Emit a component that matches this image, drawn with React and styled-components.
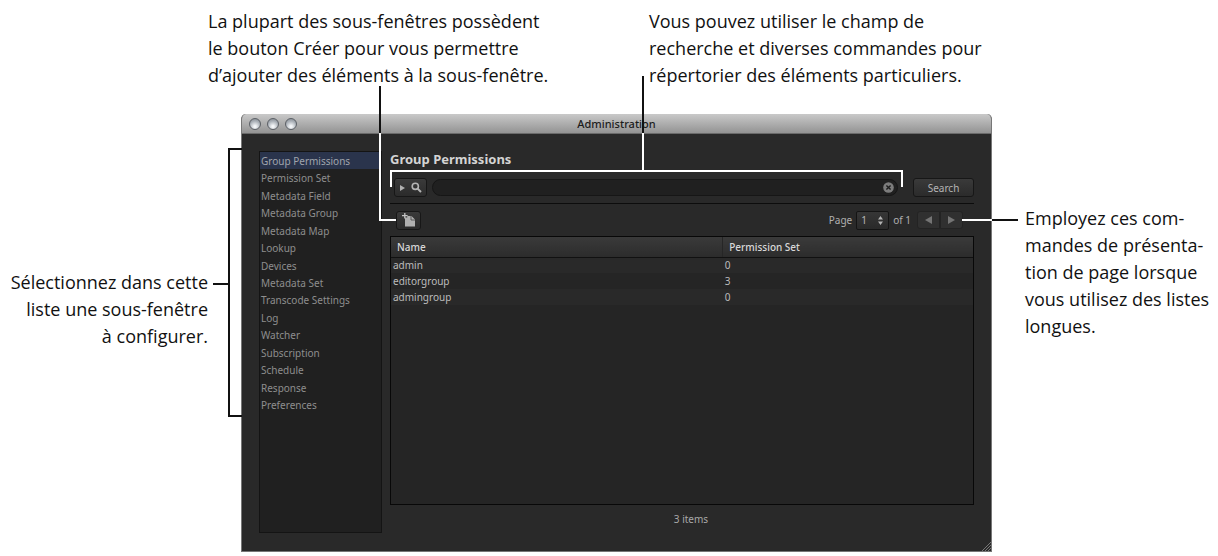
import React, { useState } from "react";
import styled, { createGlobalStyle } from "styled-components";

const GlobalStyle = createGlobalStyle`
    * {
        box-sizing: border-box;
    }

    body {
        margin: 0;
        background: #fff;
        color: #111;
        font-family: "Noto Sans", "Open Sans", sans-serif;
    }

    button, input, select {
        font-family: inherit;
        margin: 0;
    }
`

const Figure = styled.main`
    position: relative;
    display: grid;
    grid-template-columns: 241px minmax(0, 1fr) 226px;
    grid-template-rows: 114px auto;
    min-width: 1100px;
`

const TopNotes = styled.div`
    grid-column: 1 / -1;
    display: grid;
    grid-template-columns: 441px 1fr;
    padding: 8px 0 0 208px;
`

const Note = styled.p`
    margin: 0;
    font-family: "Open Sans", "Noto Sans", sans-serif;
    font-size: 18px;
    line-height: 27px;
    white-space: pre-line;
    text-align: ${(props) => props.$align || "left"};
`

const LeftNote = styled.aside`
    padding: 155px 33px 0 0;
    white-space: nowrap;
`

const RightNote = styled.aside`
    padding: 91px 0 0 33px;
    white-space: nowrap;
`

/* Callout lines, drawn over the window */
const Leader = styled.div`
    position: absolute;
    pointer-events: none;
    top: ${(props) => props.$top}px;
    left: ${(props) => (props.$left === undefined ? "auto" : `${props.$left}px`)};
    right: ${(props) => (props.$right === undefined ? "auto" : `${props.$right}px`)};
    width: ${(props) => (props.$width === undefined ? "auto" : `${props.$width}px`)};
    height: ${(props) => props.$height}px;
    border: 0 solid ${(props) => (props.$light ? "#fff" : "#111")};
    border-width: ${(props) => props.$sides};
`

const Window = styled.section`
    display: flex;
    flex-direction: column;
    min-height: 438px;
    border: solid #777;
    border-width: 0 1px 1px;
    border-radius: 5px 5px 0 0;
    background: #292929;
    overflow: hidden;
    position: relative;
`

const TitleBar = styled.header`
    display: grid;
    grid-template-columns: 60px 1fr 60px;
    align-items: center;
    height: 20px;
    padding: 0 7px;
    border-bottom: 1px solid #6a6a6a;
    background: linear-gradient(#c9c9c9, #939393);
`

const Lights = styled.div`
    display: flex;
    gap: 6px;
`

const Light = styled.button`
    width: 12px;
    height: 12px;
    padding: 0;
    border: 1px solid #5c6066;
    border-radius: 50%;
    background: radial-gradient(circle at 50% 75%, #f4f6f8 10%, #a9afb6 60%, #7d838a);
`

const WindowTitle = styled.h1`
    margin: 0;
    color: #1c1c1c;
    font-size: 11px;
    font-weight: 500;
    line-height: 18px;
    text-align: center;
`

const WindowBody = styled.div`
    flex: 1;
    display: grid;
    grid-template-columns: 123px minmax(0, 1fr);
    gap: 8px;
    padding: 17px 17px 18px 17px;
`

const Sidebar = styled.nav`
    border: 1px solid #141414;
    background: #202020;
`

const SideList = styled.ul`
    display: grid;
    grid-auto-rows: 1fr;
    height: 262px;
    margin: 0;
    padding: 0;
    list-style: none;
`

const SideLink = styled.a`
    display: flex;
    align-items: center;
    height: 100%;
    padding-left: 1px;
    background: ${(props) => (props.$active ? "#2a344c" : "transparent")};
    color: ${(props) => (props.$active ? "#a0a4ac" : "#8e8e8e")};
    font-size: 10px;
    text-decoration: none;
    white-space: nowrap;
`

const Content = styled.div`
    display: flex;
    flex-direction: column;
    min-width: 0;
`

const Heading = styled.h2`
    margin: 0;
    color: #d4d4d4;
    font-size: 13px;
    font-weight: 700;
    line-height: 16px;
`

const SearchRow = styled.form`
    display: flex;
    align-items: center;
    gap: 5px;
    margin-top: 11px;
    padding: 0 0 6px 4px;
    border-bottom: 1px solid #0c0c0c;
`

const DarkButton = styled.button`
    display: flex;
    align-items: center;
    justify-content: center;
    gap: 6px;
    width: ${(props) => props.$width}px;
    height: 19px;
    padding: 0;
    border: 1px solid #171717;
    border-radius: 3px;
    background: linear-gradient(#3a3a3a, #2b2b2b);
    color: #b4b4b4;
    font-size: 10px;
`

const SearchBox = styled.div`
    position: relative;
    flex: 1;
    margin-right: 10px;
`

const SearchInput = styled.input`
    display: block;
    width: 100%;
    height: 17px;
    padding: 0 22px 0 10px;
    border: 1px solid #161616;
    border-radius: 9px;
    outline: none;
    background: #202020;
    color: #c4c4c4;
    font-size: 10px;
`

const ClearButton = styled.button`
    position: absolute;
    top: 3px;
    right: 4px;
    display: flex;
    padding: 0;
    border: 0;
    background: none;
`

const Toolbar = styled.div`
    display: flex;
    align-items: center;
    justify-content: space-between;
    height: 32px;
    padding: 0 11px 0 6px;
`

const Pager = styled.div`
    display: flex;
    align-items: center;
    gap: 4px;
    color: #b0b0b0;
    font-size: 10px;
`

const SelectWrap = styled.span`
    position: relative;
    display: flex;

    svg {
        position: absolute;
        top: 5px;
        right: 6px;
        pointer-events: none;
    }
`

const PageSelect = styled.select`
    appearance: none;
    width: 33px;
    height: 19px;
    padding: 0 0 0 4px;
    border: 1px solid #141414;
    border-radius: 2px;
    background: linear-gradient(#363636, #2a2a2a);
    color: #b8b8b8;
    font-size: 10px;
`

const PageButtons = styled.div`
    display: flex;
    margin-left: 2px;
`

const PageButton = styled.button`
    display: flex;
    align-items: center;
    justify-content: center;
    width: 23px;
    height: 18px;
    padding: 0;
    border: 1px solid #232323;
    border-radius: ${(props) => (props.$last ? "0 3px 3px 0" : "3px 0 0 3px")};
    background: #303030;
`

const TableFrame = styled.div`
    flex: 1;
    border: 1px solid #080808;
    background: #252525;
`

const Table = styled.table`
    width: 100%;
    border-collapse: collapse;
    table-layout: fixed;
    font-size: 10px;
    text-align: left;
`

const HeadCell = styled.th`
    width: ${(props) => props.$width};
    height: 20px;
    padding: 0 0 0 6px;
    border-bottom: 1px solid #111;
    border-left: ${(props) => (props.$divided ? "1px solid #262626" : "0")};
    background: linear-gradient(#3a3a3a, #2c2c2c);
    color: #d8d8d8;
    font-weight: 500;
`

const Row = styled.tr`
    background: #252525;

    &:nth-child(odd) {
        background: #292929;
    }
`

const Cell = styled.td`
    height: 16px;
    padding: 0 0 0 2px;
    color: #bcbcbc;
    line-height: 14px;
`

const Status = styled.footer`
    height: 28px;
    padding-left: 18px;
    color: #a8a8a8;
    font-size: 10px;
    line-height: 28px;
    text-align: center;
`

const Grip = styled.svg`
    position: absolute;
    right: 0;
    bottom: 0;
`

const sections = [
    "Group Permissions",
    "Permission Set",
    "Metadata Field",
    "Metadata Group",
    "Metadata Map",
    "Lookup",
    "Devices",
    "Metadata Set",
    "Transcode Settings",
    "Log",
    "Watcher",
    "Subscription",
    "Schedule",
    "Response",
    "Preferences",
];

const groups = [
    { name: "admin", permission: 0 },
    { name: "editorgroup", permission: 3 },
    { name: "admingroup", permission: 0 },
];

function AdministrationWindow() {
    const [active, setActive] = useState(sections[0]);
    const [query, setQuery] = useState("");

    return (
        <Window>
            <TitleBar>
                <Lights>
                    <Light type="button" aria-label="Close" />
                    <Light type="button" aria-label="Minimize" />
                    <Light type="button" aria-label="Zoom" />
                </Lights>
                <WindowTitle>Administration</WindowTitle>
            </TitleBar>
            <WindowBody>
                <Sidebar aria-label="Administration">
                    <SideList>
                        {sections.map((section) => (
                            <li key={section}>
                                <SideLink
                                    href="#"
                                    $active={section === active}
                                    onClick={() => setActive(section)}
                                >
                                    {section}
                                </SideLink>
                            </li>
                        ))}
                    </SideList>
                </Sidebar>
                <Content>
                    <Heading>{active}</Heading>
                    <SearchRow onSubmit={(e) => e.preventDefault()}>
                        <DarkButton type="button" $width={33} aria-label="Search options">
                            <svg width="5" height="6" viewBox="0 0 5 6">
                                <path d="M0 0 5 3 0 6Z" fill="#b0b0b0" />
                            </svg>
                            <svg width="11" height="11" viewBox="0 0 11 11" fill="none" stroke="#b4b4b4">
                                <circle cx="4.3" cy="4.3" r="3.1" strokeWidth="1.6" />
                                <path d="M6.6 6.6 10 10" strokeWidth="2" />
                            </svg>
                        </DarkButton>
                        <SearchBox>
                            <SearchInput
                                aria-label="Search text"
                                value={query}
                                onChange={(e) => setQuery(e.target.value)}
                            />
                            <ClearButton type="button" aria-label="Clear" onClick={() => setQuery("")}>
                                <svg width="11" height="11" viewBox="0 0 11 11">
                                    <circle cx="5.5" cy="5.5" r="5.3" fill="#7c7c7c" />
                                    <path d="M3.4 3.4 7.6 7.6M7.6 3.4 3.4 7.6" stroke="#1e1e1e" strokeWidth="1.4" />
                                </svg>
                            </ClearButton>
                        </SearchBox>
                        <DarkButton type="submit" $width={61}>Search</DarkButton>
                    </SearchRow>
                    <Toolbar>
                        <DarkButton type="button" $width={25} aria-label="Create">
                            <svg width="14" height="14" viewBox="0 0 14 14">
                                <path d="M3 4.5H5.2V3H9.5L13 6.5V13.5H3Z" fill="#b0b0b0" />
                                <path d="M9 3V7H13" fill="none" stroke="#444" strokeWidth="0.8" />
                                <path d="M2.8 0V5.4M0 2.7H5.6" stroke="#c4c4c4" strokeWidth="1.3" />
                            </svg>
                        </DarkButton>
                        <Pager>
                            <label htmlFor="page">Page</label>
                            <SelectWrap>
                                <PageSelect id="page" defaultValue="1">
                                    <option value="1">1</option>
                                </PageSelect>
                                <svg width="5" height="9" viewBox="0 0 5 9" fill="#b4b4b4">
                                    <path d="M0 3.5 2.5 0 5 3.5ZM0 5.5H5L2.5 9Z" />
                                </svg>
                            </SelectWrap>
                            <span>of 1</span>
                            <PageButtons>
                                <PageButton type="button" aria-label="Previous page">
                                    <svg width="7" height="8" viewBox="0 0 7 8">
                                        <path d="M7 0V8L0 4Z" fill="#747474" />
                                    </svg>
                                </PageButton>
                                <PageButton type="button" $last aria-label="Next page">
                                    <svg width="7" height="8" viewBox="0 0 7 8">
                                        <path d="M0 0V8L7 4Z" fill="#747474" />
                                    </svg>
                                </PageButton>
                            </PageButtons>
                        </Pager>
                    </Toolbar>
                    <TableFrame>
                        <Table>
                            <thead>
                                <tr>
                                    <HeadCell $width="57%">Name</HeadCell>
                                    <HeadCell $width="43%" $divided>Permission Set</HeadCell>
                                </tr>
                            </thead>
                            <tbody>
                                {groups.map((group) => (
                                    <Row key={group.name}>
                                        <Cell>{group.name}</Cell>
                                        <Cell>{group.permission}</Cell>
                                    </Row>
                                ))}
                            </tbody>
                        </Table>
                    </TableFrame>
                    <Status>{groups.length} items</Status>
                </Content>
            </WindowBody>
            <Grip width="10" height="10" viewBox="0 0 10 10" stroke="#777">
                <path d="M1 10 10 1M4 10 10 4M7 10 10 7" />
            </Grip>
        </Window>
    )
}

export default function App() {
    return (
        <>
            <GlobalStyle />
            <Figure>
                <TopNotes>
                    <Note>
                        {"La plupart des sous-fenêtres possèdent\nle bouton Créer pour vous permettre\nd’ajouter des éléments à la sous-fenêtre."}
                    </Note>
                    <Note>
                        {"Vous pouvez utiliser le champ de\nrecherche et diverses commandes pour\nrépertorier des éléments particuliers."}
                    </Note>
                </TopNotes>
                <LeftNote>
                    <Note $align="right">
                        {"Sélectionnez dans cette\nliste une sous-fenêtre\nà configurer."}
                    </Note>
                </LeftNote>
                <AdministrationWindow />
                <RightNote>
                    <Note>
                        {"Employez ces com-\nmandes de présenta-\ntion de page lorsque\nvous utilisez des listes\nlongues."}
                    </Note>
                </RightNote>

                {/* sidebar */}
                <Leader $top={148} $left={228} $width={14} $height={269} $sides="2px 0 2px 2px" />
                <Leader $top={283} $left={213} $width={15} $height={2} $sides="2px 0 0" />
                {/* create button */}
                <Leader $top={86} $left={379} $width={2} $height={47} $sides="0 0 0 2px" />
                <Leader $top={133} $left={379} $width={17} $height={88} $sides="0 0 2px 2px" $light />
                {/* search field */}
                <Leader $top={76} $left={642} $width={2} $height={57} $sides="0 0 0 2px" />
                <Leader $top={133} $left={642} $width={2} $height={38} $sides="0 0 0 2px" $light />
                <Leader $top={170} $left={390} $right={315} $height={17} $sides="2px 2px 0" $light />
                {/* page controls */}
                <Leader $top={219} $right={226} $width={30} $height={2} $sides="2px 0 0" $light />
                <Leader $top={219} $right={200} $width={26} $height={2} $sides="2px 0 0" />
            </Figure>
        </>
    )
}
